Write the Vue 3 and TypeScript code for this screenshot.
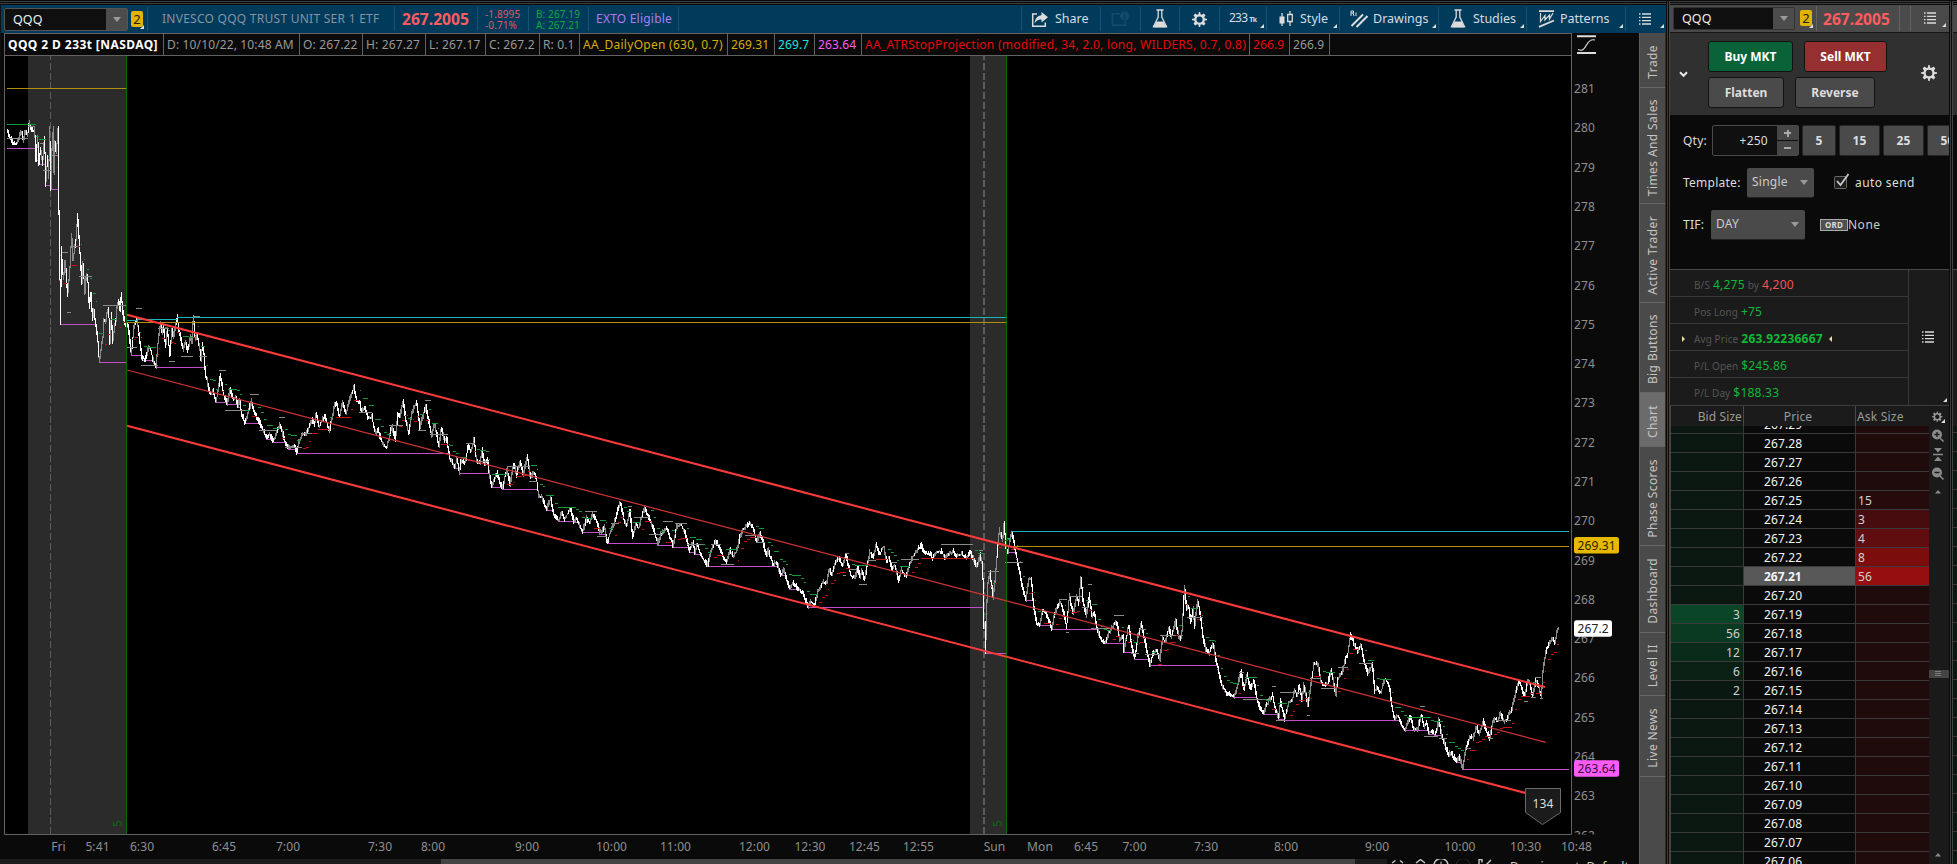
<script setup lang="ts">
type Pt = [number, number]
interface Trace { ox: number; oy: number; pts: number[] }
interface Dash { ox: number; oy: number; d: number[] }

/* Price path: x,y pairs in thirds of a pixel, relative to each origin. */
const traces: Trace[] = [
  { ox: 0, oy: 80, pts: [22,150,30,175,40,190,52,190,60,165,66,155,70,180,76,155,83,165,88,130,95,150,104,150,108,240,113,170,117,250,122,205,128,250,134,170,137,315,143,230,146,290,149,145,153,325,156,210,160,145,162,280,165,190,168,215,172,180,175,140,177,400,182,730,184,505,190,600,196,540,203,650,210,560,215,465,219,540,228,480,233,410,240,520,246,610,249,550,255,640,259,585,263,590,268,680,273,645,278,720,281,690,288,735,294,785,298,845,304,800,309,770,312,720,317,730,322,690,326,690,330,790,334,700,338,790,344,740,348,720,352,675,356,665,360,690,364,640,370,710,376,735,384,740,388,765,394,825,402,740,411,718,418,770,426,835,436,840,444,810,451,800,459,840,468,860,474,790,482,725,486,760,490,735,497,800,502,750,510,825,516,750,520,775,526,740,532,712,537,750,542,775,550,810,556,785,563,815,572,770,576,790,580,710,586,780,592,765,600,810,604,845,607,790,612,825,617,890,622,895,626,930,632,940,640,935,648,965,655,930,661,885,670,940,682,970,690,930,700,960,708,955,714,980,718,960,726,1005,735,1028,744,1000,754,965,764,1000,774,1020,780,1030,790,1050,800,1075,810,1065,820,1085,832,1055,840,1035,848,1060,856,1090,866,1105,874,1100,882,1095,891,1118,896,1090,906,1065,920,1060,928,1040,936,1020,944,1035,949,1000,958,1040,966,1020,976,1010,988,1055,998,1010,1003,980,1010,970,1018,1010,1028,970,1038,1000,1048,965,1056,940,1062,922,1070,960,1080,970,1084,995,1096,980,1104,1015,1116,1010,1126,1060,1134,1050,1144,1080,1152,1095,1160,1105,1168,1070,1176,1040,1186,1080,1194,1000] },
  { ox: 400, oy: 350, pts: [0,200,10,152,16,200,26,252,36,190,50,155,60,232,70,195,78,170,86,210,96,258,104,220,117,288,124,235,134,275,140,265,150,325,164,352,172,325,178,368,184,330,196,340,204,290,214,305,222,265,230,335,240,340,246,300,254,345,263,330,268,375,276,410,284,385,292,370,300,400,308,415,314,385,322,360,330,405,342,340,350,375,360,335,370,375,382,320,392,385,402,365,412,400,416,440,426,440,440,478,452,445,462,495,476,512,486,485,494,510,504,490,512,475,522,515,530,505,548,546,560,505,570,520,578,495,590,510,600,550,614,530,622,578,634,540,645,515,656,470,662,460,672,510,680,525,690,485,698,560,708,520,716,535,728,490,735,475,746,500,754,520,762,540,774,583,784,550,802,535,810,560,820,590,830,530,845,525,856,550,868,605,880,575,884,610,892,585,906,620,923,647,934,600,946,575,956,585,968,615,980,640,990,600,1000,620,1012,600,1020,560,1032,535,1048,520,1060,535,1070,575,1080,550,1090,580,1100,620,1104,600,1120,645,1128,635,1144,675,1152,660,1168,715,1180,700,1194,715] },
  { ox: 760, oy: 480, pts: [120,330,130,340,144,380,152,365,165,375,175,330,190,305,200,310,208,265,216,285,226,245,238,235,248,260,258,225,266,260,274,290,284,295,294,265,300,290,306,270,314,300,322,255,330,215,340,235,349,195,358,225,366,210,372,200,380,250,386,230,396,265,406,260,416,300,424,270,438,290,450,250,462,225,484,195,492,218,512,220,518,238,530,215,545,215,555,235,570,220,580,215,590,230,605,222,618,235,632,215,642,245,652,260,660,225,666,250,669,300,672,440,675,430,677,518,680,405,682,315,690,280,700,355,708,270,712,215,718,150,728,180,733,130,738,205,744,215,752,170,757,160,766,210,778,270,786,315,798,360,806,300,814,295,820,370,830,430,840,435,848,390,858,400,876,445,884,400,902,365,912,400,920,440,928,350,940,400,950,350,956,370,963,295,970,370,980,405,988,345,996,410,1004,400,1012,450,1024,480,1036,490,1046,460,1058,440,1070,425,1080,480,1090,470,1092,515,1106,435,1114,490,1124,535,1134,470,1145,430,1154,480,1170,555,1180,520,1190,510,1200,540,1208,470,1216,490,1226,445,1234,470,1248,425,1258,480] },
  { ox: 1160, oy: 520, pts: [65,350,74,200,80,270,86,255,92,310,100,265,104,325,113,240,122,290,130,355,138,390,148,400,160,370,168,420,180,470,186,495,200,520,212,525,224,530,232,500,244,455,252,510,262,465,272,510,282,480,290,530,300,565,312,580,320,555,338,525,346,565,356,595,362,545,374,598,386,550,398,540,404,510,412,530,418,495,426,540,432,495,444,555,454,490,462,430,474,435,484,490,494,495,504,490,514,450,528,525,534,475,546,460,556,420,564,400,572,345,582,370,594,395,604,375,612,420,624,460,638,435,644,515,652,500,662,520,676,475,688,500,694,545,704,600,714,585,724,615,736,630,746,600,752,590,760,625,772,630,784,585,792,620,800,605,806,640,816,635,824,645,832,630,836,600,846,650,852,665,866,705,874,695,880,710,890,725,898,710,908,745,914,710,920,680,930,650,940,655,950,620,958,645,970,605,980,635,990,655,998,610,1006,595,1012,605,1022,580,1032,605,1040,600,1048,580,1056,570,1064,530,1078,485,1086,505,1094,530,1104,480,1112,500,1118,530,1128,480,1136,500,1144,530,1150,445,1160,385,1178,355,1186,370,1190,335,1196,325] },
]

/* Flat midpoint levels: x1,x2,y triples, same units. */
const dashes: Dash[] = [
  { ox: 0, oy: 80, d: [22,84,175,84,104,139,120,128,190,128,152,271,152,175,227,187,203,517,201,212,697,210,238,499,238,275,589,310,378,676,381,410,802,408,425,685,424,474,856,474,508,745,508,524,844,543,578,829,578,600,710,598,622,829,657,677,871,675,751,991,751,778,943,778,832,1051,838,854,1012,855,905,1102,905,946,1060,1077,1117,997,1167,1200,1036] },
  { ox: 400, oy: 350, d: [0,10,226,54,77,241,76,92,151,90,144,253,198,226,280,232,268,333,320,388,349,388,410,394,556,592,484,592,620,559,634,656,520,685,695,469,702,748,502,748,788,553,790,818,514,824,860,520,862,908,583,934,964,583,964,1002,643,1034,1068,557,1068,1094,577] },
  { ox: 760, oy: 480, d: [256,266,220,249,257,286,266,290,268,298,320,313,320,347,241,392,412,247,424,478,238,543,638,193,515,545,235,658,668,211,685,716,274,736,788,247,897,920,358,918,926,457,928,966,349,984,995,313,966,986,382,994,1064,444,1062,1091,406,1112,1136,520,1136,1158,448,1156,1200,523,1200,1260,466] },
  { ox: 1160, oy: 520, d: [0,68,346,80,130,292,238,252,457,250,334,538,336,347,499,348,376,601,360,440,517,441,450,586,450,484,475,484,532,505,535,564,442,598,638,430,780,794,559,793,835,649,836,860,655,914,932,685,984,998,655,1008,1054,601,1092,1104,544,1114,1128,532,1126,1142,472,1140,1148,535] },
]

const path: Pt[] = traces.flatMap(({ ox, oy, pts }) => {
  const out: Pt[] = []
  for (let i = 0; i < pts.length; i += 2) out.push([ox + pts[i] / 3, oy + pts[i + 1] / 3])
  return out
})

function priceY(x: number): number {
  for (let i = 1; i < path.length; i++) {
    const [xa, ya] = path[i - 1]
    const [xb, yb] = path[i]
    if (x <= xb) return ya + ((yb - ya) * (x - xa)) / Math.max(0.01, xb - xa)
  }
  return path[path.length - 1][1]
}

let seed = 71
const rnd = () => ((seed = (seed * 16807) % 2147483647) / 2147483647)

let down = ''
let up = ''
let green = ''
let red = ''
let violet = ''
let low = 148.3
let trend = 1
let stop = 124
let shown = 124
for (let x = 7; x <= 1558; x++) {
  const a = priceY(x)
  const b = priceY(x + 1)
  const inner = path.filter((p) => p[0] > x && p[0] < x + 1).map((p) => p[1])
  const hi = Math.min(a, b, ...inner)
  const lo = Math.max(a, b, ...inner)
  const top = Math.round(hi - rnd() * 3.4)
  const bottom = Math.round(lo + rnd() * 2.6)
  const wick = `M${x + 0.5} ${top}V${Math.max(bottom, top + 2)}`
  if (rnd() < (b >= a ? 0.88 : 0.25)) down += wick
  else up += wick
  if (x === 127) { low = 325; trend = 1 }
  if (x === 1007) { low = 550; trend = 1; stop = 524 }
  if (lo + 0.7 > low + 0.3) low = lo + 0.7
  if (x < 1463) violet += `M${x} ${Math.floor(low) + 0.5}h1`
  const pad = x < 127 ? 24 : 13
  if (trend > 0) {
    stop = Math.max(stop, a - pad)
    if (a < stop - 1) { trend = -1; stop = a + pad }
  } else {
    stop = Math.min(stop, a + pad)
    if (a > stop + 1) { trend = 1; stop = a - pad }
  }
  if (x % 3 === 0) shown = Math.round(stop)
  if (Math.abs(shown - stop) < 5) {
    const mark = `M${x} ${shown + 0.5}h1`
    if (trend > 0) green += mark
    else red += mark
  }
}
const mids = dashes.map(({ ox, oy, d }) => {
  let s = ''
  for (let i = 0; i + 2 < d.length; i += 3) {
    const from = Math.min(d[i], d[i + 1])
    const to = Math.max(d[i], d[i + 1])
    if (d[i + 2] > 0 && to - from < 110) s += `M${ox + from / 3} ${Math.floor(oy + d[i + 2] / 3) + 0.5}H${ox + to / 3}`
  }
  return s
}).join('')

const ticks = Array.from({ length: 19 }, (_, i) => ({ v: 281 - i, y: 88.7 + i * 39.28 }))
const times: [string, number][] = [['Fri', 58.5], ['5:41', 97.5], ['6:30', 142], ['6:45', 224], ['7:00', 288], ['7:30', 380], ['8:00', 433], ['9:00', 527], ['10:00', 611.5], ['11:00', 675.5], ['12:00', 754.5], ['12:30', 810], ['12:45', 864.5], ['12:55', 918.5], ['Sun', 994.5], ['Mon', 1040], ['6:45', 1086], ['7:00', 1134.5], ['7:30', 1206], ['8:00', 1286], ['9:00', 1377], ['10:00', 1460], ['10:30', 1525.6], ['10:48', 1576.5]]
const tags = [
  { v: '269.31', y: 545, w: 45, fill: '#e6b800', ink: '#2a2200' },
  { v: '267.2', y: 628.3, w: 38, fill: '#ffffff', ink: '#222' },
  { v: '263.64', y: 768.3, w: 45, fill: '#fb5cf7', ink: '#3a0a3a' },
]

const tabs = [
  { t: 'Trade', h: 55 }, { t: 'Times And Sales', h: 116 }, { t: 'Active Trader', h: 99 }, { t: 'Big Buttons', h: 90 },
  { t: 'Chart', h: 54, on: true }, { t: 'Phase Scores', h: 99 }, { t: 'Dashboard', h: 87 }, { t: 'Level II', h: 63 }, { t: 'Live News', h: 81 },
]

const cells = [
  { t: 'QQQ 2 D 233t [NASDAQ]', w: 159, c: 'strong' },
  { t: 'D: 10/10/22, 10:48 AM', w: 136, c: '' },
  { t: 'O: 267.22', w: 63, c: '' },
  { t: 'H: 267.27', w: 63, c: '' },
  { t: 'L: 267.17', w: 60, c: '' },
  { t: 'C: 267.2', w: 54, c: '' },
  { t: 'R: 0.1', w: 40, c: '' },
  { t: 'AA_DailyOpen (630, 0.7)', w: 148, c: 'gold study' },
  { t: '269.31', w: 47, c: 'gold' },
  { t: '269.7', w: 40, c: 'cyan' },
  { t: '263.64', w: 47, c: 'pink' },
  { t: 'AA_ATRStopProjection (modified, 34, 2.0, long, WILDERS, 0.7, 0.8)', w: 388, c: 'red study' },
  { t: '266.9', w: 40, c: 'red' },
  { t: '266.9', w: 40, c: '' },
]

const stats = [
  { k: 'Pos Long', v: '+75' },
  { k: 'Avg Price', v: '263.92236667', hot: true },
  { k: 'P/L Open', v: '$245.86' },
  { k: 'P/L Day', v: '$188.33' },
]

const ask: Record<string, [string, string]> = { '267.25': ['15', '#260b0d'], '267.24': ['3', '#460c0e'], '267.23': ['4', '#5f0d0e'], '267.22': ['8', '#7b0d0d'], '267.21': ['56', '#960f0e'] }
const bid: Record<string, [string, string]> = { '267.19': ['3', '#0b4527'], '267.18': ['56', '#0b3a22'], '267.17': ['12', '#0a2a1a'], '267.16': ['6', '#0a2015'], '267.15': ['2', '#0a1812'] }
const rows = Array.from({ length: 24 }, (_, i) => {
  const p = (267.29 - i * 0.01).toFixed(2)
  return { p, ask: ask[p]?.[0] ?? '', askBg: ask[p]?.[1] ?? '#1f0b0c', bid: bid[p]?.[0] ?? '', bidBg: bid[p]?.[1] ?? '#0b1811' }
})
const gear = 'M7.3 0h1.4l.4 2.4 1.4.6 2-1.4 1.9 1.9-1.4 2 .6 1.4 2.4.4v1.4l-2.4.4-.6 1.4 1.4 2-1.9 1.9-2-1.4-1.4.6-.4 2.4H7.3l-.4-2.4-1.4-.6-2 1.4-1.9-1.9 1.4-2L2.4 9.1 0 8.700V7.300l2.400-.4.6-1.400-1.400-2 1.900-1.900 2 1.400 1.400-.6zM8 4.700a3.300 3.300 0 1 0 0 6.600 3.300 3.300 0 0 0 0-6.600z'
const list = 'M0 1h1.500M3 1h9M0 4.300h1.500M3 4.300h9M0 7.600h1.500M3 7.600h9M0 11h1.500M3 11h9'
</script>

<template>
  <div class="app">
    <div class="strip"></div>
    <div class="main">
      <section class="left">
        <header class="bar">
          <div class="combo c1"><span>QQQ</span><i class="arrow"></i></div>
          <div class="link">2<i class="corner"></i></div>
          <div class="cell name">INVESCO QQQ TRUST UNIT SER 1 ETF</div>
          <div class="cell price">267.2005</div>
          <div class="cell duo loss"><span>-1.8995</span><span>-0.71%</span></div>
          <div class="cell duo quote"><span>B: 267.19</span><span>A: 267.21</span></div>
          <div class="cell exto">EXTO Eligible</div>
          <div class="cell fill"></div>
          <div class="cell tool t-share">
            <svg width="18" height="17" viewBox="0 0 18 17"><path d="M6 3H1.700V15.300H14.300V11.500" fill="none" stroke="#dcdcdc" stroke-width="1.500" /><path d="M10.500 1L17 6.300 10.500 11.500V8.500C7 8.400 5 9.800 3.600 12.600 4 7.600 6.300 4.600 10.500 4.300z" fill="#dcdcdc" /></svg>
            <span>Share</span>
          </div>
          <div class="cell tool t-cam"><svg width="19" height="16" viewBox="0 0 19 16"><path d="M9 2.700H1.500V14.300H14.500V10" fill="none" stroke="#154a69" stroke-width="1.600" /><circle cx="13.500" cy="5" r="4.500" fill="#154a69" /><path d="M13.500 4.300v3.500M13.500 2v1.300M2 5h6" stroke="#003a5a" stroke-width="1.300" /></svg></div>
          <div class="cell tool t-flask"><svg width="16" height="20" viewBox="0 0 16 20"><path d="M4.500 1h7M6.200 1v7L1.500 17.500h13L9.800 8V1" fill="none" stroke="#dcdcdc" stroke-width="1.300" /><path d="M4.500 12.500h7l3 6h-13z" fill="#dcdcdc" /></svg></div>
          <div class="cell tool t-gear"><svg width="15" height="15" viewBox="0 0 16 16"><path :d="gear" fill="#dcdcdc" fill-rule="evenodd" /></svg></div>
          <div class="cell tool t-tick"><span class="tk">233<small>Tk</small></span><i class="corner"></i></div>
          <div class="cell tool t-style">
            <svg width="14" height="16" viewBox="0 0 14 16"><path d="M3 2v13M11 0v3M11 11v4" stroke="#dcdcdc" stroke-width="1.300" /><path d="M.5 5.500h5v7h-5z" fill="#dcdcdc" /><path d="M8.700 3.500h4.600v7H8.700z" fill="none" stroke="#dcdcdc" stroke-width="1.300" /></svg>
            <span>Style</span><i class="corner"></i>
          </div>
          <div class="cell tool t-draw">
            <svg width="18" height="18" viewBox="0 0 18 18"><path d="M1.500 16L13 4.500M6.500 17L17.500 6" fill="none" stroke="#dcdcdc" stroke-width="2" /><path d="M1 6V1h2.500v2H1M3 3l1 3M6 2.500V6" fill="none" stroke="#dcdcdc" stroke-width="1" /></svg>
            <span>Drawings</span><i class="corner"></i>
          </div>
          <div class="cell tool t-study">
            <svg width="16" height="20" viewBox="0 0 16 20"><path d="M4.500 1h7M6.200 1v7L1.500 17.500h13L9.800 8V1" fill="none" stroke="#dcdcdc" stroke-width="1.300" /><path d="M4.500 12.500h7l3 6h-13z" fill="#dcdcdc" /></svg>
            <span>Studies</span><i class="corner"></i>
          </div>
          <div class="cell tool t-patt">
            <svg width="17" height="18" viewBox="0 0 17 18"><path d="M1 1.200H16M1 16.800L16 10.500" fill="none" stroke="#dcdcdc" stroke-width="1.800" /><path d="M2.500 3v8.500L7 5.500v4.500l4.500-5v4L15 3" fill="none" stroke="#dcdcdc" stroke-width="1.200" /></svg>
            <span>Patterns</span><i class="corner"></i>
          </div>
          <div class="cell tool t-menu"><svg width="12" height="12" viewBox="0 0 12 12"><path :d="list" stroke="#dcdcdc" stroke-width="1.300" /></svg><i class="corner"></i></div>
        </header>
        <div class="body">
          <div class="chart">
            <div class="legend"><div v-for="(c, i) in cells" :key="i" class="lg" :class="c.c" :style="{ width: c.w + 'px' }"><span>{{ c.t }}</span></div></div>
            <svg class="plot" width="1639" height="803" viewBox="0 56 1639 803">
              <rect x="5" y="56" width="1566" height="778" fill="#000" />
              <rect x="28" y="56" width="98" height="778" fill="#2b2b2b" />
              <rect x="970" y="56" width="36" height="778" fill="#2b2b2b" />
              <g shape-rendering="crispEdges">
                <path d="M50.500 53V834" stroke="#5c5c5c" stroke-dasharray="7 2.800" />
                <path d="M984 53V834" stroke="#5c5c5c" stroke-width="2" stroke-dasharray="7 2.800" />
                <path :d="violet" stroke="#c24fc8" />
                <path :d="up" stroke="#8a8a8a" />
                <path :d="down" stroke="#fff" />
                <path :d="mids" stroke="#8a8a8a" />
                <path :d="green" stroke="#139c38" />
                <path :d="red" stroke="#cc1111" />
                <path d="M7 88.500H126M127 322.500H1006M1007 546.500H1569" stroke="#b08f0a" />
                <path d="M127 320.500H137M137 319.500H177M177 317.500H1006M1007 538.500H1011M1011 531.500H1569" stroke="#17b4b8" />
                <path d="M1463 769.500H1569" stroke="#c24fc8" />
                <path d="M126.500 56V834M1006.500 56V834" stroke="#006a00" />
              </g>
              <path d="M127 314.700L1545 687M127 425.700L1545 798.200" stroke="#fb3b3b" stroke-width="2.100" />
              <path d="M127 370L1545.700 742.300" stroke="#d03535" stroke-width="1.200" />
              <g class="five"><text transform="translate(122 827) rotate(-90)">5</text><text transform="translate(1002 827) rotate(-90)">5</text></g>
              <path d="M1525.500 788.500H1560.500V812.500L1542.500 824.500 1525.500 812.500z" fill="#1b1b1b" stroke="#6a6a6a" />
              <text class="bub" x="1543" y="808">134</text>
              <path d="M4.500 56V834.500H1571.500V33" fill="none" stroke="#626262" />
              <g class="ax">
                <text v-for="t in ticks" :key="t.v" x="1574" :y="t.y + 4.500">{{ t.v }}</text>
                <svg x="1572" y="820" width="40" height="14.500"><text x="2" y="19.500">262</text></svg>
              </g>
              <g class="tm"><text v-for="(t, i) in times" :key="i" :x="t[1]" y="851">{{ t[0] }}</text></g>
              <g v-for="t in tags" :key="t.v">
                <rect x="1574" :y="t.y - 8" :width="t.w" height="16.500" rx="2.500" :fill="t.fill" />
                <text x="1577.500" :y="t.y + 4.500" :fill="t.ink">{{ t.v }}</text>
              </g>
            </svg>
            <svg class="fit" width="19" height="19" viewBox="0 0 19 19"><path d="M0 1.200h19M0 18h19" stroke="#dcdcdc" stroke-width="2" /><path d="M1 14.500c4 2 6 0 8.500-4.500S14 4 18 5" fill="none" stroke="#dcdcdc" stroke-width="1.200" /></svg>
            <footer class="foot">
              <div class="track"><div class="thumb"></div></div>
              <svg width="251" height="5" viewBox="1387 859 251 5" fill="none" stroke="#c8c8c8">
                <path d="M1392 863l3.500-2.500M1400 860.500l3 2.500M1416 863l4.500-3.500 4.500 3.500M1479 864v-4.500h3v3M1485 866l6-6" stroke-width="1.400" />
                <circle cx="1441" cy="865.500" r="7" stroke-width="1.500" /><path d="M1441 861.500v3" /><circle cx="1463" cy="865.500" r="7" stroke="#2c2c2c" />
                <text x="1510" y="871" class="ds">Drawing set: Default</text>
              </svg>
            </footer>
          </div>
          <nav class="tabs"><div v-for="t in tabs" :key="t.t" class="tab" :class="{ on: t.on }" :style="{ height: t.h + 'px' }"><span>{{ t.t }}</span></div></nav>
        </div>
      </section>
      <div class="split"></div>
      <section class="right">
        <header class="rbar">
          <div class="combo c2"><span>QQQ</span><i class="arrow"></i></div>
          <div class="link">2<i class="corner"></i></div>
          <div class="cell price">267.2005</div>
          <div class="cell gap"></div>
          <div class="cell rmenu"><svg width="12" height="12" viewBox="0 0 12 12"><path :d="list" stroke="#dcdcdc" stroke-width="1.300" /></svg><i class="corner"></i></div>
        </header>
        <div class="quick">
          <svg class="chev" width="9" height="7" viewBox="0 0 9 7"><path d="M1 1.200L4.500 4.800 8 1.200" fill="none" stroke="#e8e8e8" stroke-width="2" /></svg>
          <div class="qb">
            <div class="pair"><button class="btn buy">Buy MKT</button><button class="btn sell">Sell MKT</button></div>
            <div class="pair p2"><button class="btn flat">Flatten</button><button class="btn rev">Reverse</button></div>
          </div>
          <svg class="qgear" width="16" height="16" viewBox="0 0 16 16"><path :d="gear" fill="#dcdcdc" fill-rule="evenodd" /></svg>
        </div>
        <div class="form">
          <div class="fr f1">
            <label class="w29">Qty:</label>
            <div class="qty"><span>+250</span><div class="spin"><i class="plus"></i><i></i></div></div>
            <div class="n n5">5</div><div class="n">15</div><div class="n">25</div><div class="n">50</div>
          </div>
          <div class="fr f2">
            <label class="w64">Template:</label><div class="sel s1">Single<i class="tri"></i></div>
            <svg class="chk" width="16" height="17" viewBox="0 0 16 17"><rect x=".5" y="3.500" width="12" height="12" rx="1" fill="#1c1c1c" stroke="#6a6a6a" /><path d="M3 8l3.500 4L14.500 1" fill="none" stroke="#c8c8c8" stroke-width="1.800" /></svg>
            <span class="as">auto send</span>
          </div>
          <div class="fr f3">
            <label class="w28">TIF:</label><div class="sel s2">DAY<i class="tri"></i></div>
            <span class="ord">ORD</span><span class="none">None</span>
          </div>
        </div>
        <div class="stats">
          <div class="rowsx">
            <div class="st"><em>B/S</em><b>4,275</b><em class="by">by</em><b class="neg">4,200</b></div>
            <div v-for="s in stats" :key="s.k" class="st" :class="{ hot: s.hot }"><i v-if="s.hot" class="pt r"></i><em>{{ s.k }}</em><b>{{ s.v }}</b><i v-if="s.hot" class="pt l"></i></div>
          </div>
          <div class="side"><svg width="12" height="12" viewBox="0 0 12 12"><path :d="list" stroke="#dcdcdc" stroke-width="1.300" /></svg><i class="corner"></i></div>
        </div>
        <div class="ladder">
          <div class="grid">
            <div class="lh"><span class="bidh">Bid Size</span><span class="prh">Price</span><span class="askh">Ask Size</span></div>
            <div class="lrows">
              <div class="shift">
                <div v-for="r in rows" :key="r.p" class="lr" :class="{ cur: r.p === '267.21' }">
                  <span class="bd" :style="{ background: r.bidBg }">{{ r.bid }}</span><span class="pr">{{ r.p }}</span><span class="ak" :style="{ background: r.askBg }">{{ r.ask }}</span>
                </div>
              </div>
            </div>
          </div>
          <div class="scroll">
            <svg width="20" height="458" viewBox="1929 406 20 458">
              <g transform="translate(1932 411.500) scale(.66)"><path :d="gear" fill="#9a9a9a" fill-rule="evenodd" /></g>
              <path d="M1945 423l0-4-4 4z" fill="#ddd" />
              <g fill="#8a8a8a"><circle cx="1937" cy="434.500" r="5" /><circle cx="1937" cy="472.500" r="5" /><path d="M1934 448h8l-4 4.500zM1934 461h8l-4-4.500zM1935 493.500h6l-3-3.500zM1935 856.500h6l-3-3.500z" /></g>
              <path d="M1940 438l3.500 3.500M1940 476l3.500 3.500M1933 454.500h10" stroke="#8a8a8a" stroke-width="1.500" />
              <path d="M1934.500 434.500h5M1937 432v5M1934.500 472.500h5" stroke="#1a1a1a" stroke-width="1.300" />
              <rect x="1929" y="670" width="20" height="8" fill="#444" /><path d="M1935 671.500h6M1935 673.500h6M1935 675.500h6" stroke="#888" stroke-width=".8" />
            </svg>
          </div>
        </div>
      </section>
      <div class="split"></div>
      <section class="next"><div class="n1"></div><div class="n2"></div><div class="n3"></div><div class="n4"></div><div class="n6"></div></section>
    </div>
  </div>
</template>

<style>
body { background: #0a0a0a; overflow: hidden; }
</style>

<style scoped>
* { box-sizing: border-box; }
.app { width: 1957px; height: 864px; overflow: hidden; background: #0a0a0a; font: 12px/16px "Noto Sans", "Open Sans", sans-serif; letter-spacing: .1px; color: #ddd; display: flex; flex-direction: column; }
.strip { height: 5px; flex: none; background: linear-gradient(#0b0b0b 1px, #3c3c3c 1px 2px, #0b0b0b 2px 3px, #3c3c3c 3px 4px, #0b0b0b 4px); }
.main { display: flex; flex: 1; min-height: 0; }
.left { width: 1666px; display: flex; flex-direction: column; border-left: 1px solid #111; flex: none; }
.bar { height: 28px; background: #003b5c; display: flex; padding-left: 3px; flex: none; }
.combo { height: 23px; margin-top: 3px; border: 1px solid #555; border-radius: 2px; background: #0f0f0f; display: flex; align-items: center; font-size: 12.5px; color: #eee; padding-left: 8px; justify-content: space-between; flex: none; }
.c1 { width: 124px; }
.arrow { width: 21px; height: 21px; background: #4c4c4c; display: flex; align-items: center; justify-content: center; }
.arrow::after, .tri::after { content: ""; display: block; border: 4.500px solid transparent; border-top: 5px solid #9a9a9a; border-bottom: 0; }
.link { width: 12px; height: 16px; margin: 6px 3px 0 4px; background: #e0b400; color: #222; border-radius: 2px; font-size: 13px; line-height: 16px; text-align: center; position: relative; flex: none; }
.bar .link { margin: 6px 4px 0 3px; }
.corner { position: absolute; right: 2px; bottom: 3px; border-left: 4px solid transparent; border-bottom: 4px solid #ddd; width: 0; height: 0; }
.link .corner { right: -1px; bottom: -2px; }
.cell { border-left: 1px solid #1d506d; display: flex; align-items: center; position: relative; flex: none; height: 24px; margin-top: 2px; white-space: nowrap; }
.name { width: 247px; padding-left: 14px; color: #8793a0; letter-spacing: .26px; }
.bar .price { width: 83px; padding-left: 7px; }
.price { font-size: 15.6px; font-weight: 700; color: #ff5c60; letter-spacing: 0; }
.duo { flex-direction: column; align-items: flex-start; justify-content: center; font-size: 10px; line-height: 11px; padding: 2px 0 0 7px; }
.loss { width: 51px; color: #e0575f; }
.quote { width: 60px; color: #12a840; }
.exto { width: 91px; padding-left: 7px; color: #b07cf0; border-right: 1px solid #1d506d; letter-spacing: .22px; }
.fill { flex: 1; border: 0; }
.tool { font-size: 12.5px; color: #d6dce0; letter-spacing: 0; }
.t-share { width: 79px; padding-left: 9px; gap: 6px; }
.t-cam { width: 40px; padding-left: 10px; }
.t-flask { width: 39px; padding-left: 11px; }
.t-gear { width: 40px; padding-left: 12px; }
.t-tick { width: 47px; padding-left: 9px; }
.tk { font-size: 12px; letter-spacing: -.8px; } .tk small { font-size: 7px; font-weight: 700; margin-left: 2px; letter-spacing: -.5px; }
.t-style { width: 73px; padding-left: 12px; gap: 7px; }
.t-draw { width: 99px; padding-left: 10px; gap: 5px; }
.t-study { width: 88px; padding-left: 11px; gap: 7px; }
.t-patt { width: 99px; padding-left: 11px; gap: 5px; }
.t-menu { width: 41px; padding-left: 13px; }
.body { display: flex; flex: 1; min-height: 0; }
.chart { width: 1638px; position: relative; margin-left: -1px; flex: none; display: flex; flex-direction: column; }
.legend { height: 23px; margin-left: 4px; width: 1568px; flex: none; display: flex; border: 1px solid #626262; background: #0a0a0a; }
.lg { border-right: 1px solid #626262; flex: none; white-space: nowrap; padding-left: 3px; display: flex; align-items: center; color: #999; letter-spacing: .14px; }
.strong { color: #fff; font-weight: 700; letter-spacing: .42px; width: 158px; } .gold { color: #d4ae08; } .cyan { color: #1ee0e0; } .pink { color: #f55cf5; } .red { color: #e80808; } .study { letter-spacing: .27px; }
.plot { display: block; flex: none; background: #0a0a0a; font-size: 12px; }
.ax, .tm { fill: #909090; } .tm, .bub { text-anchor: middle; } .bub { fill: #ddd; }
.five { fill: #0a6a14; }
.fit { position: absolute; left: 1577px; top: 2px; }
.foot { height: 5px; display: flex; flex: none; overflow: hidden; }
.track { width: 1387px; height: 5px; background: #1c1c1c; padding-left: 441px; flex: none; } .thumb { width: 914px; height: 5px; background: #444; }
.ds { fill: #c8c8c8; stroke: none; font-size: 12px; letter-spacing: .2px; }
.tabs { width: 27px; background: #4a4a4a; border-left: 1px solid #5c5c5c; border-right: 1px solid #003b5c; margin-left: 1px; }
.tab { border-bottom: 1px solid #666; display: flex; align-items: center; justify-content: center; padding-top: 4px; }
.tab span { writing-mode: vertical-rl; transform: rotate(180deg); white-space: nowrap; color: #c4c4c4; letter-spacing: .4px; }
.tab.on { background: #6b6b6b; }
.split { width: 4px; margin-top: -4px; background: linear-gradient(90deg, #0b0b0b 1px, #3c3c3c 1px 2px, #0b0b0b 2px 3px, #444 3px); flex: none; }
.right { width: 279px; display: flex; flex-direction: column; overflow: hidden; flex: none; }
.rbar { height: 27px; background: #4a4a4a; display: flex; padding-left: 3px; flex: none; }
.c2 { width: 122px; margin-top: 2px; border-color: #333; } .rbar .link { margin: 5px 4px 0 5px; }
.rbar .cell { margin: 1px 0 0; border-color: #636363; height: 25px; } .rbar .price { width: 83px; padding-left: 6px; } .gap { width: 11px; } .rbar .rmenu { flex: 1; padding-left: 13px; padding-bottom: 2px; }
.rmenu .corner { bottom: 4px; right: 3px; }
.quick { height: 83px; background: #303030; display: flex; border-top: 1px solid #161616; flex: none; }
.chev { margin: 38px 0 0 9px; } .qb { margin-left: 20px; width: 213px; padding-top: 8px; }
.pair { display: flex; gap: 11px; } .p2 { margin-top: 5px; }
.btn { height: 31px; border: 1px solid #121212; border-radius: 3px; background: #4a4a4a; color: #ddd; font: 700 12px "Noto Sans", sans-serif; padding: 0; }
.buy { width: 85px; background: #0a6338; color: #fff; } .sell { width: 83px; background: #963030; color: #fff; } .flat { width: 76px; } .rev { width: 80px; }
.qgear { margin: 32px 0 0 0; }
.form { height: 154px; flex: none; overflow: hidden; padding-left: 13px; color: #ddd; letter-spacing: .25px; }
.fr { display: flex; align-items: center; white-space: nowrap; } .fr > * { flex: none; }
.f1 { height: 31px; margin-top: 10px; } .f2 { height: 31px; margin-top: 11px; } .f3 { height: 31px; margin-top: 11px; }
.w29 { width: 29px; } .w64 { width: 64px; } .w28 { width: 28px; }
.qty { width: 87px; height: 31px; border: 1px solid #4a4a4a; border-radius: 2px; background: #0f0f0f; display: flex; justify-content: flex-end; align-items: center; gap: 9px; margin-right: 3px; }
.spin { width: 21px; display: grid; gap: 1px; }
.spin i { height: 14px; background: linear-gradient(#a8a8a8, #a8a8a8) center / 7px 2px no-repeat #464646; }
.spin .plus { background: linear-gradient(#a8a8a8, #a8a8a8) center / 7px 2px no-repeat, linear-gradient(#a8a8a8, #a8a8a8) center / 2px 7px no-repeat #464646; }
.n { width: 41px; height: 31px; margin-right: 3px; background: #4a4a4a; border: 1px solid #262626; border-radius: 2px; font-weight: 700; display: flex; align-items: center; justify-content: center; } .n5 { width: 34px; }
.sel { height: 30px; background: #4a4a4a; border-radius: 2px; border-bottom: 1px solid #222; display: flex; align-items: center; justify-content: space-between; padding: 0 6px 0 5px; color: #ccc; }
.s1 { width: 67px; } .s2 { width: 94px; } .chk { margin-left: 20px; margin-top: -3px; } .as { margin-left: 5px; letter-spacing: .4px; }
.ord { margin-left: 15px; width: 28px; height: 12px; border: 1px solid #aaa; background: #505050; font: 700 8px/10px "Noto Sans"; text-align: center; color: #ddd; }
.none { color: #ccc; letter-spacing: .5px; }
.stats { height: 137px; flex: none; background: #1b1b1b; border-top: 1px solid #484848; border-bottom: 1px solid #3c3c3c; display: flex; letter-spacing: .22px; }
.rowsx { width: 239px; border-right: 1px solid #3a3a3a; } .st { height: 27px; border-bottom: 1px solid #3a3a3a; padding: 7px 0 0 24px; white-space: nowrap; position: relative; }
.st:last-child { border: 0; }
.st em { font-style: normal; font-size: 10px; color: #555; margin-right: 3px; letter-spacing: .1px; } .st b { font-weight: 400; color: #10b838; } .st .by { margin-left: 3px; } .st .neg { color: #f0555a; } .hot b { font-weight: 700; }
.pt { position: absolute; top: 12px; border: 3px solid transparent; } .r { left: 12px; border-left: 3px solid #eedc9a; border-right: 0; } .l { left: 159px; border-right: 3px solid #eedc9a; border-left: 0; }
.side { flex: 1; padding: 61px 0 0 13px; position: relative; }
.ladder { display: flex; flex: 1; min-height: 0; } .grid { width: 259px; display: flex; flex-direction: column; background: #1b1b1b; border-left: 1px solid #444; }
.lh { height: 20px; display: flex; line-height: 21px; color: #999; flex: none; } .bidh { width: 73px; text-align: right; padding-right: 1px; border-right: 1px solid #484848; } .prh { width: 112px; text-align: center; border-right: 1px solid #484848; padding-right: 3px; } .askh { padding-left: 1px; letter-spacing: .2px; }
.lrows { flex: 1; overflow: hidden; } .shift { margin-top: -11px; }
.lr { height: 19px; border-bottom: 1px solid #3a3a3a; display: flex; line-height: 20px; color: #d0d0d0; } .bd { width: 73px; text-align: right; padding-right: 3px; border-right: 1px solid #3a3a3a; } .pr { width: 112px; padding-left: 20px; background: #0a0a0a; color: #f4f4f4; border-right: 1px solid #3a3a3a; } .ak { flex: 1; padding-left: 2px; }
.lr span { height: 18px; }
.cur .pr { background: #585858; font-weight: 700; letter-spacing: 0; }
.scroll { width: 20px; background: #1a1a1a; } .scroll svg { display: block; }
.next { flex: 1; display: flex; flex-direction: column; } .n1 { height: 27px; background: #4a4a4a; } .n2 { height: 83px; background: #303030; border-top: 1px solid #161616; } .n3 { height: 154px; } .n4 { height: 157px; background: #1b1b1b; border-top: 1px solid #484848; } .n6 { flex: 1; background: repeating-linear-gradient(#0b1811 0 6px, #3a3a3a 6px 7px, #0b1811 7px 19px); }
</style>
